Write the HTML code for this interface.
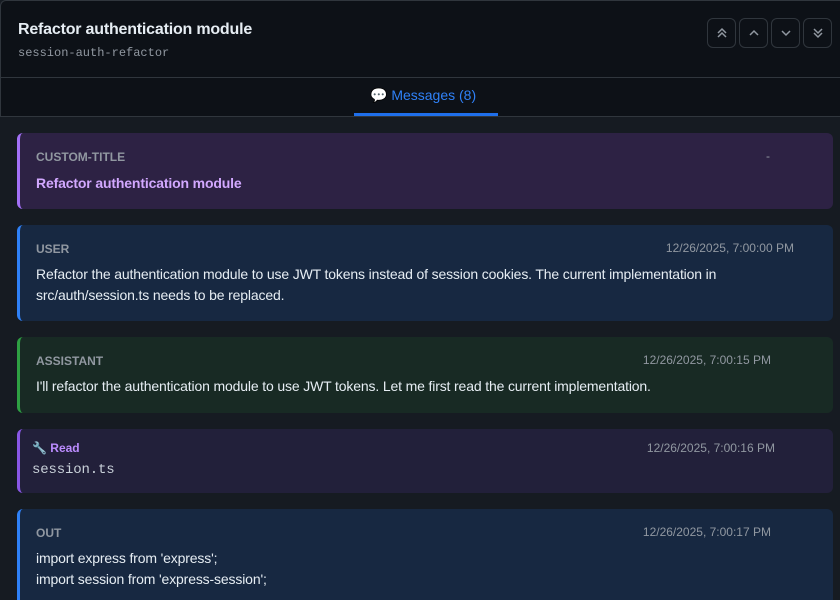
<!DOCTYPE html>
<html><head><meta charset="utf-8"><style>
*{box-sizing:border-box;margin:0;padding:0}
html,body{width:840px;height:600px;overflow:hidden}
body{background:#161b22;font-family:"Liberation Sans",sans-serif;color:#e6edf3;position:relative}
.hdr{position:absolute;left:0;top:0;width:840px;height:78px;background:#0d1117;border:1px solid #30363d;border-right:none;border-bottom:1px solid #30363d;border-top-left-radius:6px}
.title{position:absolute;left:17px;top:20px;font-size:16px;font-weight:bold;color:#e6edf3;letter-spacing:-0.2px}
.sub{position:absolute;left:17px;top:45px;font-family:"Liberation Mono",monospace;font-size:12px;color:#9198a1}
.btn{position:absolute;top:17px;width:29px;height:30px;border:1px solid #30363d;border-radius:6px;background:#0d1117}
.btn svg{position:absolute;left:7px;top:7px}
.tabs{position:absolute;left:0;top:78px;width:840px;height:39px;background:#0d1117;border-left:1px solid #30363d;border-bottom:1px solid #30363d}
.tab{position:absolute;left:369px;top:9px;font-size:14px;color:#2f81f7}
.ul{position:absolute;left:353px;top:35px;width:144px;height:3px;background:#1f6feb}
.card{position:absolute;left:17px;width:816px;border-radius:6px;border-left:3px solid}
.lab{position:absolute;left:16px;top:17px;font-size:12px;font-weight:bold;color:#9198a1}
.ts{position:absolute;top:16px;font-size:12px;color:#9198a1}
.txt{position:absolute;left:16px;font-size:14px;line-height:21px;color:#e6edf3;letter-spacing:-0.15px}
</style></head><body>
<div class="hdr">
<div class="title">Refactor authentication module</div>
<div class="sub">session-auth-refactor</div>
<div class="btn" style="left:706px"><svg width="14" height="14" viewBox="0 0 14 14" fill="none" stroke="#9198a1" stroke-width="1.5"><path d="M3 7l4-4 4 4M3 11l4-4 4 4"/></svg></div>
<div class="btn" style="left:738px"><svg width="14" height="14" viewBox="0 0 14 14" fill="none" stroke="#9198a1" stroke-width="1.5"><path d="M3 9l4-4 4 4"/></svg></div>
<div class="btn" style="left:770px"><svg width="14" height="14" viewBox="0 0 14 14" fill="none" stroke="#9198a1" stroke-width="1.5"><path d="M3 5l4 4 4-4"/></svg></div>
<div class="btn" style="left:802px"><svg width="14" height="14" viewBox="0 0 14 14" fill="none" stroke="#9198a1" stroke-width="1.5"><path d="M3 3l4 4 4-4M3 7l4 4 4-4"/></svg></div>
</div>
<div class="tabs"><div class="tab">💬 Messages (8)</div><div class="ul"></div></div>

<div class="card" style="top:133px;height:76px;background:#2d2244;border-color:#a371f7">
<div class="lab">CUSTOM-TITLE</div><div class="ts" style="left:746px">-</div>
<div class="txt" style="top:40px;color:#d2a8ff;font-weight:bold">Refactor authentication module</div></div>

<div class="card" style="top:225px;height:96px;background:#172841;border-color:#2f81f7">
<div class="lab">USER</div><div class="ts" style="right:39px">12/26/2025, 7:00:00 PM</div>
<div class="txt" style="top:39px">Refactor the authentication module to use JWT tokens instead of session cookies. The current implementation in<br>src/auth/session.ts needs to be replaced.</div></div>

<div class="card" style="top:337px;height:76px;background:#182a24;border-color:#2ea043">
<div class="lab">ASSISTANT</div><div class="ts" style="right:62px">12/26/2025, 7:00:15 PM</div>
<div class="txt" style="top:39px">I'll refactor the authentication module to use JWT tokens. Let me first read the current implementation.</div></div>

<div class="card" style="top:429px;height:64px;background:#22203a;border-color:#8957e5">
<div class="lab" style="left:12px;top:12px;color:#bc8cff">🔧 Read</div><div class="ts" style="right:58px;top:12px">12/26/2025, 7:00:16 PM</div>
<div class="txt" style="left:12px;top:31px;font-family:'Liberation Mono',monospace;font-size:14px;color:#c9d1d9">session.ts</div></div>

<div class="card" style="top:509px;height:91px;border-bottom-left-radius:0;border-bottom-right-radius:0;background:#172841;border-color:#2f81f7">
<div class="lab">OUT</div><div class="ts" style="right:62px">12/26/2025, 7:00:17 PM</div>
<div class="txt" style="top:39px">import express from 'express';<br>import session from 'express-session';</div></div>
</body></html>
